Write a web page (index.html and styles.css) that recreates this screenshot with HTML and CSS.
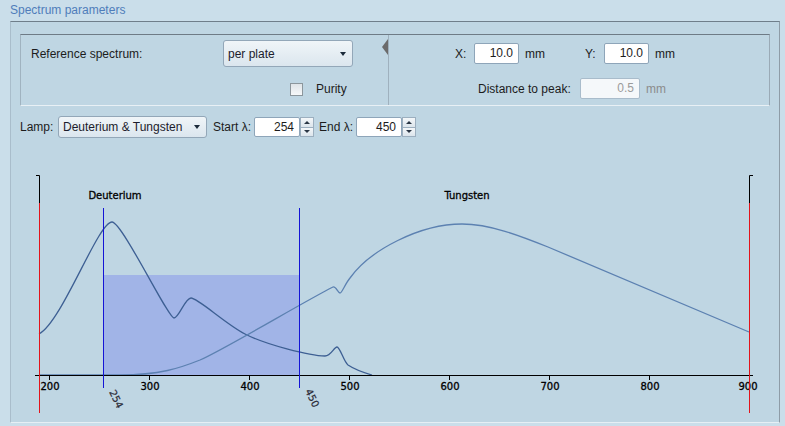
FILE: index.html
```html
<!DOCTYPE html>
<html>
<head>
<meta charset="utf-8">
<title>Spectrum parameters</title>
<link rel="stylesheet" href="styles.css">
</head>
<body>
<div class="title">Spectrum parameters</div>
<div class="outer">
  <div class="panel">
    <div class="pane-left">
      <div class="row">
        <span class="lbl lbl-ref">Reference spectrum:</span>
        <div class="combo combo-ref"><span>per plate</span><i class="caret"></i></div>
      </div>
      <div class="row row-purity">
        <span class="checkbox"></span>
        <span class="lbl">Purity</span>
      </div>
    </div>
    <div class="pane-right">
      <div class="row row-xy">
        <span class="lbl lbl-x">X:</span>
        <div class="field f-xy">10.0</div>
        <span class="unit unit-x">mm</span>
        <span class="lbl lbl-x">Y:</span>
        <div class="field f-xy">10.0</div>
        <span class="unit">mm</span>
      </div>
      <div class="row row-dist">
        <span class="lbl lbl-dist">Distance to peak:</span>
        <div class="field f-dist disabled">0.5</div>
        <span class="unit muted">mm</span>
      </div>
    </div>
    <i class="splitter"></i>
  </div>

  <div class="lamp">
    <span class="lbl lbl-lamp">Lamp:</span>
    <div class="combo combo-lamp"><span>Deuterium &amp; Tungsten</span><i class="caret"></i></div>
    <span class="lbl lbl-start">Start λ:</span>
    <div class="field f-spin">254</div>
    <div class="spin"><b class="up"></b><b class="down"></b></div>
    <span class="lbl lbl-end">End λ:</span>
    <div class="field f-spin">450</div>
    <div class="spin"><b class="up"></b><b class="down"></b></div>
  </div>

  <svg class="chart" width="768" height="272" viewBox="11 148 768 272">
    <rect x="103" y="275" width="196" height="100" fill="#a1b4e7"/>
    <!-- Deuterium curve -->
    <path fill="none" stroke="#3d5f93" stroke-width="1.3"
      d="M39,334 C62,322 98,222 112,222 C122,222 168,318 174,318 C179,318 185,298 191,298 C198,298 225,323.6 245,334 C265,344.4 310,356 325,356 C331,356 334,347 337,347 C340,347 344,362 348,365 C354,369 365,373 372,375"/>
    <!-- Tungsten curve -->
    <path fill="none" stroke="#5c81b1" stroke-width="1.3"
      d="M39,375 L120,375 C160,375 180,368 200,360 C225,349 305,301 333,287 C336,286 338,293 340,293 C342,293 345,284 350,278 C370,250 420,224 462,224 C490,224 520,235.8 548,247 L749,332"/>
    <!-- axis -->
    <line x1="35" y1="375.5" x2="753" y2="375.5" stroke="#000" stroke-width="1"/>
    <g stroke="#000" stroke-width="1">
      <line x1="49.5" y1="375" x2="49.5" y2="380"/>
      <line x1="149.5" y1="375" x2="149.5" y2="380"/>
      <line x1="249.5" y1="375" x2="249.5" y2="380"/>
      <line x1="349.5" y1="375" x2="349.5" y2="380"/>
      <line x1="449.5" y1="375" x2="449.5" y2="380"/>
      <line x1="549.5" y1="375" x2="549.5" y2="380"/>
      <line x1="649.5" y1="375" x2="649.5" y2="380"/>
      <line x1="749.5" y1="375" x2="749.5" y2="380"/>
      <polyline fill="none" points="36,175.5 39.5,175.5 39.5,203"/>
      <polyline fill="none" points="753,175.5 749.5,175.5 749.5,203"/>
    </g>
    <g class="ticks">
      <text x="50" y="390">200</text>
      <text x="150" y="390">300</text>
      <text x="250" y="390">400</text>
      <text x="350" y="390">500</text>
      <text x="450" y="390">600</text>
      <text x="550" y="390">700</text>
      <text x="650" y="390">800</text>
      <text x="748" y="390">900</text>
    </g>
    <!-- range bounds -->
    <line x1="39.5" y1="203" x2="39.5" y2="413" stroke="#e3141b" stroke-width="1"/>
    <line x1="749.5" y1="203" x2="749.5" y2="413" stroke="#e3141b" stroke-width="1"/>
    <line x1="103.5" y1="208" x2="103.5" y2="388" stroke="#1414d6" stroke-width="1"/>
    <line x1="299.5" y1="208" x2="299.5" y2="388" stroke="#1414d6" stroke-width="1"/>
    <text class="rot" transform="translate(109,392) rotate(64)">254</text>
    <text class="rot" transform="translate(305,391) rotate(64)">450</text>
    <text class="lamp-name" x="115" y="199">Deuterium</text>
    <text class="lamp-name" x="467" y="199">Tungsten</text>
  </svg>
</div>
</body>
</html>
```
FILE: styles.css
```css
body {
  margin: 0;
  width: 785px;
  height: 426px;
  overflow: hidden;
  background: #cadeea;
  font: 12px "Liberation Sans", Arial, sans-serif;
  color: #1c1c1c;
}

.title {
  height: 21px;
  line-height: 21px;
  padding-left: 10px;
  color: #4f7dba;
}

.outer {
  margin-left: 10px;
  width: 768px;
  height: 400px;
  border: 1px solid;
  border-color: #6f7e8a #8e9ca7 #e6eff5 #a9bdcb;
  background: #bfd6e3;
}

.panel {
  position: relative;
  display: flex;
  margin: 12px 9px 0 9px;
  height: 70px;
  border: 1px solid;
  border-color: #6e7b86 #9aaab6 #e8f0f5 #a0b3c0;
}

.pane-left {
  width: 357px;
  padding: 5px 0 0 10px;
  border-right: 1px solid #9fb1be;
}

.pane-right {
  flex: 1;
  padding: 8px 0 0 66px;
}

.row {
  display: flex;
  align-items: center;
}

.lbl { white-space: nowrap; }
.lbl-ref { width: 192px; }

.row-purity {
  margin-top: 14px;
  height: 16px;
  padding-left: 259px;
}

.checkbox {
  width: 11px;
  height: 11px;
  border: 1px solid #8c969c;
  background: linear-gradient(#dfe4e8, #f6f8f9);
  margin-right: 13px;
}

.combo {
  position: relative;
  box-sizing: border-box;
  display: flex;
  align-items: center;
  padding-left: 4px;
  border: 1px solid #93a7b8;
  border-radius: 3px;
  background: linear-gradient(#f0f5f8, #dbe6ee);
  color: #1c1c2c;
}

.combo-ref { width: 130px; height: 27px; }
.combo-lamp { width: 149px; height: 22px; }

.caret {
  position: absolute;
  right: 6px;
  top: 50%;
  margin-top: -2px;
  border-left: 3.5px solid transparent;
  border-right: 3.5px solid transparent;
  border-top: 4px solid #1b2a3a;
}

.splitter {
  position: absolute;
  left: 361px;
  top: 4px;
  width: 0;
  height: 0;
  border-top: 8px solid transparent;
  border-bottom: 8px solid transparent;
  border-right: 6px solid #6b6b6b;
}

.field {
  box-sizing: border-box;
  height: 21px;
  line-height: 19px;
  padding-right: 5px;
  text-align: right;
  border: 1px solid #8ea5b9;
  border-radius: 2px;
  background: #fff;
}

.row-xy { height: 21px; }
.lbl-x { width: 19px; }
.f-xy { width: 45px; }
.unit { margin-left: 6px; }
.unit-x { width: 60px; }

.row-dist {
  margin-top: 14px;
  height: 21px;
  padding-left: 23px;
}
.lbl-dist { width: 102px; }
.f-dist { width: 60px; }
.disabled {
  background: #f5f8fa;
  border-color: #a9bccb;
  color: #9b9b9b;
}
.muted { color: #8c8c8c; }

.lamp {
  display: flex;
  align-items: center;
  height: 22px;
  margin-top: 10px;
  padding-left: 9px;
}
.lbl-lamp { width: 38px; }
.lbl-start { width: 41px; margin-left: 6px; }
.lbl-end { width: 37px; margin-left: 5px; }
.f-spin { width: 46px; height: 20px; line-height: 18px; }

.spin {
  display: flex;
  flex-direction: column;
  width: 14px;
  height: 20px;
}
.spin b {
  position: relative;
  flex: 1;
  box-sizing: border-box;
  border: 1px solid #9cafbf;
  background: linear-gradient(#f4f7f9, #dce5ec);
}
.spin b + b { border-top: none; }
.spin b::after {
  content: "";
  position: absolute;
  left: 3px;
  top: 3px;
  border-left: 3px solid transparent;
  border-right: 3px solid transparent;
}
.spin .up::after { border-bottom: 3px solid #2a3644; }
.spin .down::after { border-top: 3px solid #2a3644; top: 2px; }

.chart {
  display: block;
  margin-top: 10px;
}

.ticks text,
.rot,
.lamp-name {
  font: 10px "DejaVu Sans", sans-serif;
  fill: #000;
  stroke: #000;
  stroke-width: 0.3;
}
.ticks text, .lamp-name { text-anchor: middle; }
.rot { fill: #2a2a36; stroke: #2a2a36; stroke-width: 0.2; }
```
